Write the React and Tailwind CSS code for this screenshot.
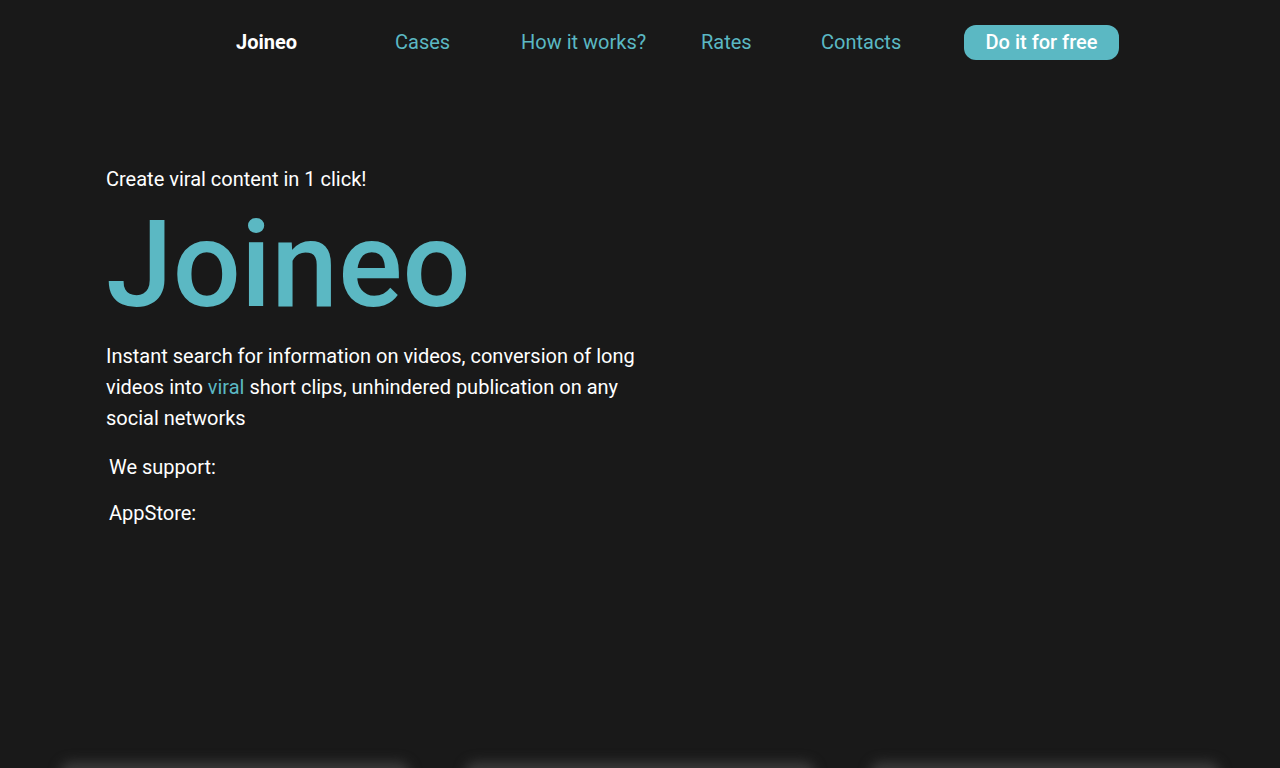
export default function App() {
  const links = [
    { label: 'Cases', cls: 'w-[126px]' },
    { label: 'How it works?', cls: 'w-[180px]' },
    { label: 'Rates', cls: 'w-[120px]' },
    { label: 'Contacts', cls: 'w-[143px]' },
  ]

  return (
    <div className="h-[768px] overflow-hidden bg-[#191919] font-['Roboto',sans-serif] text-white">
      <nav className="flex h-[84px] items-center pl-[236px]">
        <a className="w-[159px] text-[20px] font-bold">Joineo</a>
        {links.map((l) => (
          <a key={l.label} className={`${l.cls} text-[20px] text-[#5bb8c3]`}>
            {l.label}
          </a>
        ))}
        <button className="h-[35px] w-[155px] rounded-[12px] bg-[#5bb8c3] text-[20px] font-medium text-white">
          Do it for free
        </button>
      </nav>

      <section className="pl-[106px] pt-[82px]">
        <p className="text-[20px] leading-[26px]">Create viral content in 1 click!</p>
        <h1 className="mt-[-2px] text-[120px] font-medium leading-[150px] text-[#5bb8c3]">Joineo</h1>
        <p className="mt-[1px] w-[550px] text-[20px] leading-[31px]">
          Instant search for information on videos, conversion of long videos into{' '}
          <span className="text-[#5bb8c3]">viral</span> short clips, unhindered publication on any
          social networks
        </p>
        <div className="mt-[20px] flex flex-col gap-[20px] pl-[3px] text-[20px] leading-[26px]">
          <p>We support:</p>
          <p>AppStore:</p>
        </div>
      </section>

      <div className="mt-[236px] flex justify-center gap-[55px]">
        {[0, 1, 2].map((i) => (
          <div key={i} className="h-[200px] w-[350px] rounded-[12px] bg-[#3a3a3a] blur-[6px]" />
        ))}
      </div>
    </div>
  )
}
